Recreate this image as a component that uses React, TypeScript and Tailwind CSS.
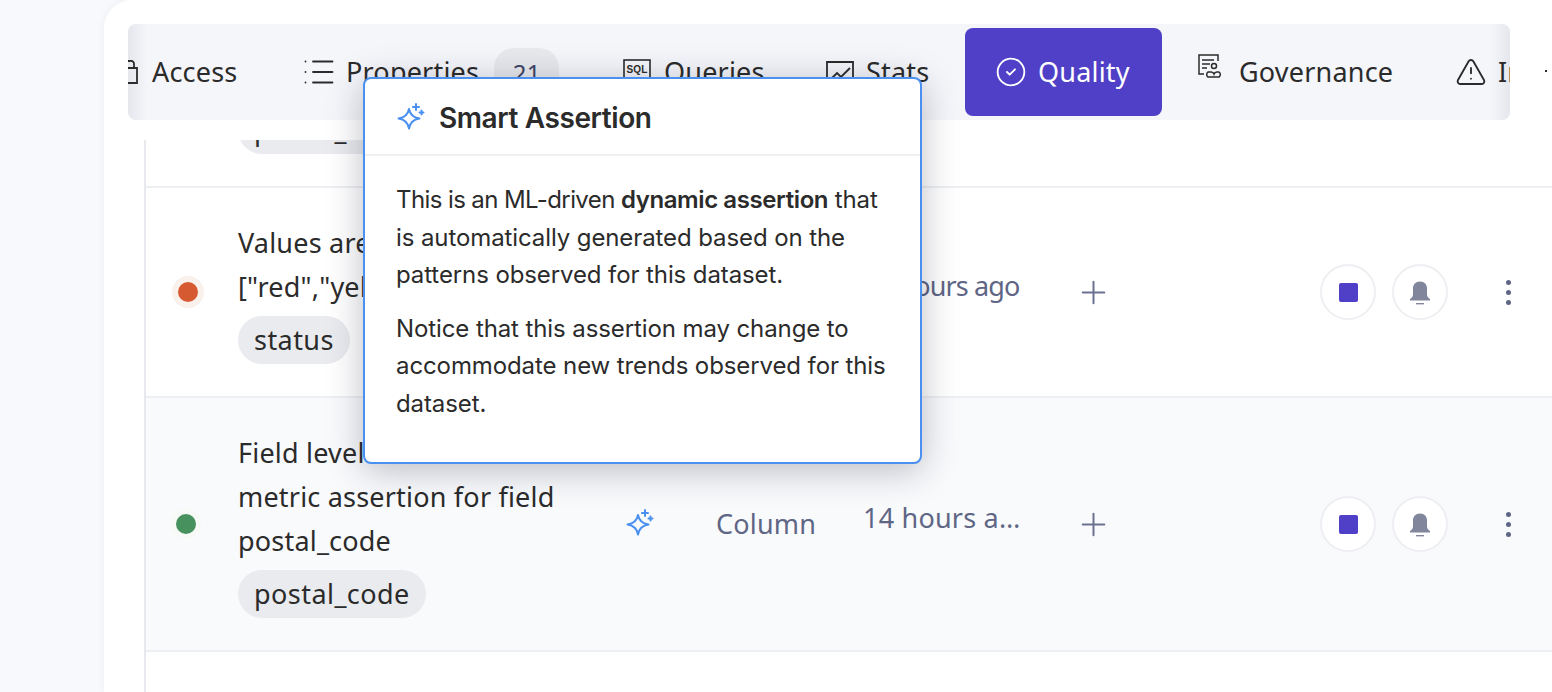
import { CircleCheck, List, Plus, TriangleAlert } from "lucide-react";

const mulish = "font-['Noto_Sans',sans-serif] tracking-[0.2px]";

function Sparkle({ className }: { className?: string }) {
  return (
    <svg viewBox="0 0 30 30" fill="none" stroke="currentColor" strokeWidth="2" strokeLinejoin="round" strokeLinecap="round" className={className}>
      <path d="M12 6c1 5.500 4 8.500 10.500 9.500c-6.500 1-9.500 4-10.500 10c-1-6-4-9-10.500-10c6.500-1 9.500-4 10.500-9.500z" />
      <path d="M19 1v6M16 4h6M24.500 7.500v4M22.500 9.500h4" />
    </svg>
  );
}

function SqlIcon() {
  return (
    <svg viewBox="0 0 28 24" className="mb-[2px] h-[24px] w-[28px] shrink-0" fill="none">
      <rect x="1" y="1" width="26" height="21" stroke="#2b2b2b" strokeWidth="1.600" />
      <text x="14" y="14" textAnchor="middle" fontSize="10" fontWeight="700" fill="#2b2b2b" fontFamily="Liberation Sans">SQL</text>
      <path d="M2 19.500h24" stroke="#2b2b2b" strokeWidth="2" />
    </svg>
  );
}

function StatsIcon() {
  return (
    <svg viewBox="0 0 28 24" className="h-[24px] w-[28px] shrink-0" fill="none" stroke="#2b2b2b" strokeWidth="1.800">
      <path d="M1 23V2h26v21" />
      <path d="M4 20l7-7 4 4 9-9" />
    </svg>
  );
}

function GovernanceIcon() {
  return (
    <svg viewBox="0 0 24 24" className="mb-[12px] h-[24px] w-[24px] shrink-0" fill="none" stroke="#2b2b2b" strokeWidth="1.500">
      <path d="M20 7V1H1v19h5" />
      <path d="M4 6h12M4 10h8M4 14h5" />
      <circle cx="16" cy="12" r="2.500" />
      <path d="M10 23a3 3 0 0 1 0-5h3a3 3 0 0 1 3 2a3 3 0 0 1 3-2h2a3 3 0 0 1 0 5z" />
    </svg>
  );
}

function BellIcon() {
  return (
    <svg viewBox="0 0 24 24" className="h-[25px] w-[24px]" fill="#81869d">
      <path d="M12 1C7.500 1 5 4 5 8v6c0 2-1 3-3 4.500V20h20v-1.500C20 17 19 16 19 14V8c0-4-2.500-7-7-7z" />
      <path d="M8 23.200h8" stroke="#81869d" strokeWidth="1.400" />
    </svg>
  );
}

function Tab({ icon, label, badge, active, className }: { icon: React.ReactNode; label: string; badge?: string; active?: boolean; className: string }) {
  return (
    <div className={`flex h-[88px] shrink-0 items-center rounded-lg ${className} ${active ? "bg-[#503fc7] text-white" : "text-[#2b2b2b]"}`}>
      {icon}
      <span>{label}</span>
      {badge && (
        <span className="mt-[20px] ml-[2px] flex h-[50px] w-[65px] items-center justify-center self-start rounded-[20px] bg-[#e8e9ed] text-[24px] text-[#3c4464]">{badge}</span>
      )}
    </div>
  );
}

function Chip({ label }: { label: string }) {
  return <span className="inline-flex h-[48px] items-center rounded-[24px] bg-[#eaebef] px-[16px] tracking-[0.45px] text-[#2b2b2b]">{label}</span>;
}

function RowEnd({ time, type, timeClass }: { time: string; type: string; timeClass: string }) {
  return (
    <>
      <div className="flex w-[62px] shrink-0 justify-center">
        <Sparkle className="h-[30px] w-[30px] text-[#4a90f0]" />
      </div>
      <div className="w-[191px] shrink-0 pl-[44px] text-[#5f6685]">{type}</div>
      <div className={`mb-[12px] w-[163px] shrink-0 text-[#5f6685] ${timeClass}`}>{time}</div>
      <div className="ml-[52px] flex w-[30px] shrink-0 justify-center text-[#6b7190]">
        <Plus size={37} strokeWidth={1.300} className="-mx-[4px] shrink-0" />
      </div>
      <div className="ml-[212px] flex gap-[16px]">
        <div className="flex h-[56px] w-[56px] items-center justify-center rounded-full border-2 border-[#eeeff2] bg-white">
          <div className="h-[19px] w-[19px] rounded-[2px] bg-[#503fc7]" />
        </div>
        <div className="flex h-[56px] w-[56px] items-center justify-center rounded-full border-2 border-[#eeeff2] bg-white">
          <BellIcon />
        </div>
      </div>
      <div className="ml-[56px] flex w-[8px] shrink-0 flex-col items-center gap-[5px]">
        <span className="h-[5px] w-[5px] rounded-full bg-[#5f6685]" />
        <span className="h-[5px] w-[5px] rounded-full bg-[#5f6685]" />
        <span className="h-[5px] w-[5px] rounded-full bg-[#5f6685]" />
      </div>
    </>
  );
}

export default function App() {
  return (
    <div className={`flex h-[692px] w-full overflow-hidden bg-[#f8f9fc] pl-[104px] text-[27px] ${mulish}`}>
      <div className="relative flex min-w-0 flex-1 flex-col overflow-hidden rounded-tl-[28px] bg-white shadow-[0_0_8px_rgba(40,50,90,0.06)]">
        {/* tab bar */}
        <div className="mt-[24px] ml-[24px] flex items-center">
          <div className="relative h-[96px] w-[1382px] shrink-0 overflow-hidden rounded-lg bg-[#f5f6fa] pt-[4px]">
            <div className="absolute inset-y-0 left-0 w-[20px] bg-gradient-to-r from-[#e6e7ec] to-transparent" />
            <div className="absolute inset-y-0 right-0 w-[20px] bg-gradient-to-l from-[#e6e7ec] to-transparent" />
            <div className="relative z-10 flex">
              <div className="flex h-[88px] w-[145px] shrink-0 items-center gap-[14px] text-[#2b2b2b]">
                <svg viewBox="0 0 10 24" className="h-[24px] w-[10px] shrink-0" fill="none" stroke="#2b2b2b" strokeWidth="1.800">
                  <path d="M0 1h2a3 3 0 0 1 4 3v4M0 8h9v15H0" />
                </svg>
                <span>Access</span>
              </div>
              <Tab className="w-[318px] gap-[13px] pl-[32px]" icon={<List size={36} strokeWidth={1.200} className="-mx-[4px] shrink-0" />} label="Properties" badge="21" />
              <Tab className="w-[203px] gap-[13px] pl-[32px]" icon={<SqlIcon />} label="Queries" />
              <Tab className="w-[171px] gap-[12px] pl-[32px]" icon={<StatsIcon />} label="Stats" />
              <Tab className="w-[197px] gap-[13px] pl-[32px]" icon={<CircleCheck size={32} strokeWidth={1.400} className="-mx-[2px] shrink-0" />} label="Quality" active />
              <Tab className="w-[263px] gap-[17px] pl-[36px]" icon={<GovernanceIcon />} label="Governance" />
              <Tab className="w-[150px] gap-[13px] pl-[32px]" icon={<TriangleAlert size={32} strokeWidth={1.400} className="-mx-[2px] shrink-0" />} label="Incidents" />
            </div>
          </div>
          <span className="mb-[2px] ml-[35px] h-[2px] w-[2px] bg-[#2b2b2b]" />
        </div>

        {/* table */}
        <div className="mt-[20px] ml-[40px] flex-1 overflow-hidden border-l-2 border-[#e8e9ef]">
          <div className="h-[48px] overflow-hidden border-b-2 border-[#eeeff2] pl-[92px]">
            <div className="mt-[-34px]">
              <Chip label="postal_code" />
            </div>
          </div>
          <div className="flex h-[210px] items-center border-b-2 border-[#eeeff2] bg-white">
            <div className="flex w-[92px] shrink-0 justify-center pr-[8px]">
              <span className="flex h-[32px] w-[32px] items-center justify-center rounded-full bg-[#faf0ec]">
                <span className="h-[20px] w-[20px] rounded-full bg-[#d65a31]" />
              </span>
            </div>
            <div className="w-[372px] shrink-0 leading-[44px] text-[#2b2b2b]">
              <div>Values are within set</div>
              <div>["red","yellow","green"]</div>
              <div className="mt-[7px] flex h-[48px]">
                <Chip label="status" />
              </div>
            </div>
            <RowEnd type="Column" time="14 hours ago" timeClass="whitespace-nowrap tracking-[-0.85px]" />
          </div>
          <div className="flex h-[254px] items-center border-b-2 border-[#eeeff2] bg-[#f9fafc]">
            <div className="flex w-[92px] shrink-0 justify-center pr-[12px]">
              <span className="flex h-[30px] w-[30px] items-center justify-center rounded-full bg-[#f6f9f5]">
                <span className="h-[20px] w-[20px] rounded-full bg-[#47915f]" />
              </span>
            </div>
            <div className="w-[372px] shrink-0 leading-[44px] text-[#2b2b2b]">
              <div>Field level volume</div>
              <div>metric assertion for field</div>
              <div>postal_code</div>
              <div className="mt-[7px] flex h-[48px]">
                <Chip label="postal_code" />
              </div>
            </div>
            <RowEnd type="Column" time="14 hours ago" timeClass="truncate" />
          </div>
        </div>

        {/* smart assertion popover */}
        <div className="absolute top-[77px] left-[259px] z-20 w-[559px] rounded-lg border-2 border-[#4a90f0] bg-white font-['Inter',sans-serif] tracking-[-0.1px] text-[#2b2b2b] shadow-[0_6px_36px_rgba(20,25,50,0.28)]">
          <div className="flex h-[77px] items-center gap-[12px] border-b-2 border-[#f0f0f2] pt-[2px] pl-[32px]">
            <Sparkle className="h-[30px] w-[30px] text-[#4a90f0]" />
            <span className="text-[28px] font-semibold tracking-[-0.4px]">Smart Assertion</span>
          </div>
          <div className="pt-[25px] pr-[24px] pb-[40px] pl-[31px] text-[24px] leading-[37.500px]">
            <p><span className="tracking-[-0.6px]">This is an ML-driven </span><b className="font-semibold tracking-[-0.4px]">dynamic assertion</b> that is automatically generated based on the patterns observed for this dataset.</p>
            <p className="mt-[16px]">Notice that this assertion may change to accommodate new trends observed for this dataset.</p>
          </div>
        </div>
      </div>
    </div>
  );
}
